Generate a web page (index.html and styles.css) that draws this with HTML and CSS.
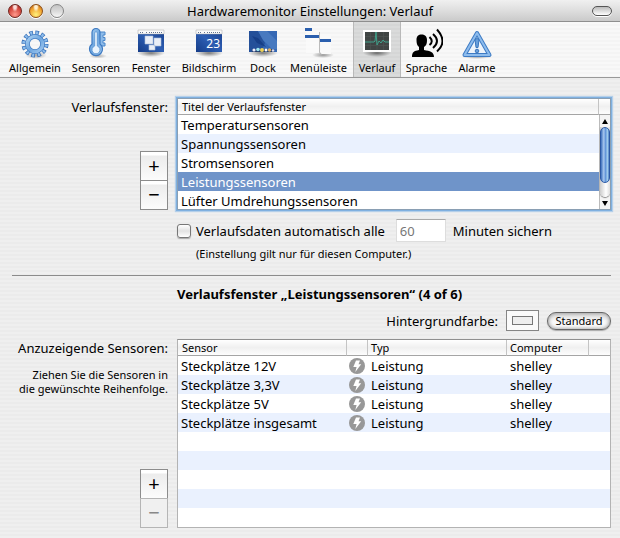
FILE: index.html
```html
<!DOCTYPE html>
<html lang="de">
<head>
<meta charset="utf-8">
<title>Hardwaremonitor Einstellungen: Verlauf</title>
<link rel="stylesheet" href="styles.css">
</head>
<body>
<svg class="defs" aria-hidden="true">
  <defs>
    <linearGradient id="aqua" x1="0" y1="0" x2="1" y2="1"><stop offset="0" stop-color="#a9d0f2"/><stop offset=".5" stop-color="#6ca5df"/><stop offset="1" stop-color="#9cc5ee"/></linearGradient>
    <linearGradient id="desk" x1="1" y1="0" x2="0" y2="1"><stop offset="0" stop-color="#173f8e"/><stop offset=".5" stop-color="#2d5eb3"/><stop offset="1" stop-color="#153c88"/></linearGradient>
    <radialGradient id="shade"><stop offset="0" stop-color="#000" stop-opacity=".5"/><stop offset="1" stop-color="#000" stop-opacity="0"/></radialGradient>
    <symbol id="bolt" viewBox="0 0 16 16"><circle cx="8" cy="8" r="8" fill="#989898"/><path d="M7 2.500h4L9.500 6.300h2.700L6.300 14l1.300-5H4.300z" fill="#fff"/></symbol>
  </defs>
</svg>
<header class="titlebar">
  <div class="lights">
    <button class="light red" aria-label="Schließen"></button>
    <button class="light amber" aria-label="Minimieren"></button>
    <button class="light clear" aria-label="Zoomen" disabled></button>
  </div>
  <h1>Hardwaremonitor Einstellungen: Verlauf</h1>
  <button class="pill" aria-label="Symbolleiste"></button>
</header>
<nav class="toolbar">
  <button class="tool">
    <svg viewBox="0 0 32 32"><ellipse cx="17" cy="28" rx="11" ry="4" fill="url(#shade)" opacity=".7"/>
      <g fill="none"><circle cx="16" cy="17" r="11" stroke="#3a72ba" stroke-width="5" stroke-dasharray="3.460 2.300"/><circle cx="16" cy="17" r="11" stroke="#8dbdec" stroke-width="3.600" stroke-dasharray="1.960 3.800" stroke-dashoffset="-.75"/>
      <circle cx="16" cy="17" r="7.600" stroke="#3f7ac2" stroke-width="4.800"/><circle cx="16" cy="17" r="7.600" stroke="url(#aqua)" stroke-width="3.400"/></g></svg>
    <span>Allgemein</span></button>
  <button class="tool">
    <svg viewBox="0 0 32 32"><ellipse cx="18" cy="29" rx="9" ry="2.500" fill="url(#shade)" opacity=".6"/>
      <path d="M19 5h6v3h-2v2.500h2v3h-2V16h2v3h-6" fill="#8dbbe9" stroke="#4c88ca"/>
      <path d="M12 5.500a4 4 0 0 1 8 0V17a6.500 6.500 0 1 1-8 0z" fill="url(#aqua)" stroke="#3c78c0" stroke-width="1.200"/>
      <path d="M14.700 6a1.300 1.300 0 0 1 2.600 0v13a4 4 0 1 1-2.600 0z" fill="#e8f3fd" stroke="#5b94d2" stroke-width=".8"/></svg>
    <span>Sensoren</span></button>
  <button class="tool">
    <svg viewBox="0 0 32 32"><ellipse cx="16" cy="26" rx="14" ry="4" fill="url(#shade)"/><path d="M3 3h26v22H3z" fill="url(#desk)"/><path d="M3 3h26v4H3z" fill="#fafafa" stroke="#aaa" stroke-width=".5"/><path d="M5 5.500h4M11 5.500h1M14 5.500h13" stroke="#65758f" stroke-dasharray="1 1"/>
      <g fill="#e9eef7" stroke="#aebfd9" stroke-width=".6"><path d="M10 9h8v8h-8zM19 11h7v8h-7zM14 18h6v5h-6z"/></g></svg>
    <span>Fenster</span></button>
  <button class="tool">
    <svg viewBox="0 0 32 32"><ellipse cx="16" cy="26" rx="14" ry="4" fill="url(#shade)"/><path d="M3 3h26v22H3z" fill="url(#desk)"/><path d="M3 3h26v4H3z" fill="#fafafa" stroke="#aaa" stroke-width=".5"/><path d="M5 5.500h4M11 5.500h1M14 5.500h13" stroke="#65758f" stroke-dasharray="1 1"/>
      <text x="27" y="21" class="num">23</text></svg>
    <span>Bildschirm</span></button>
  <button class="tool">
    <svg viewBox="0 0 32 32"><ellipse cx="16" cy="26" rx="15" ry="4" fill="url(#shade)"/><path d="M2 4h28v21H2z" fill="#3568b4"/><path d="M2 4h9l7 12-4 9H2z" fill="#245099"/><path d="M11 4l5 9 9 9h5V14L20 4z" fill="#4779bf"/><path d="M5 9l6 2 8 9-9-4z" fill="#173f87"/>
      <path d="M5 22h22v3H5z" fill="#203b6b"/><circle cx="7" cy="23" r="1.600" fill="#eef"/><circle cx="11" cy="22.500" r="1.800" fill="#9de6ef"/><circle cx="15" cy="23" r="2" fill="#f0d257"/><circle cx="19" cy="23" r="1.500" fill="#fff"/><circle cx="22.500" cy="23" r="1.700" fill="#dcae62"/><circle cx="26" cy="23.500" r="1.300" fill="#dde"/></svg>
    <span>Dock</span></button>
  <button class="tool">
    <svg viewBox="0 0 32 32"><ellipse cx="20" cy="28" rx="11" ry="3" fill="url(#shade)" opacity=".8"/><path d="M3 4h13v22H3z" fill="#fafafa" opacity=".8"/><path d="M17 7h11v20H18z" fill="#f9f9f9"/><path d="M2 1h7v3H2zM2 8h14v3H2zM17 12h11v3H17z" fill="#2b5fae"/><path d="M16.500 5v20q0 2 2 2" fill="none" stroke="#bbb"/></svg>
    <span>Menüleiste</span></button>
  <button class="tool active" aria-pressed="true">
    <svg viewBox="0 0 32 32"><ellipse cx="16" cy="26" rx="14" ry="4" fill="url(#shade)"/><path d="M3 4h26v20H3z" fill="#404544" stroke="#fff" stroke-width="2"/><path d="M9.500 5v18M16 5v18M22.500 5v18M4 9.500h24M4 14h24M4 18.500h24" stroke="#4d5351" stroke-width=".7"/><path d="M4 15h9l1-1 1-9 1 13 2-4 2 2 2-3 2 2h4" fill="none" stroke="#3f9f89"/></svg>
    <span>Verlauf</span></button>
  <button class="tool">
    <svg viewBox="0 0 32 32"><path d="M1 30c0-5 2-6 7-7v-3c-2-1.500-2.500-3.500-2.500-7C5.500 9 7.500 7.500 10.500 7.500S16 9 16 13c0 3.500-.5 5.500-3 7v3c6 1 10 2 10 7z"/><g fill="none" stroke="#000" stroke-width="2"><path d="M18.500 10q4.500 4.500 0 8"/><path d="M22 7q8 7 0 14"/><path d="M26 2.500q11 12 0 22"/></g></svg>
    <span>Sprache</span></button>
  <button class="tool">
    <svg viewBox="0 0 32 32"><ellipse cx="16" cy="30" rx="15" ry="2" fill="url(#shade)" opacity=".6"/><path d="M16 6l12.500 22h-25z" fill="#eef4fb" stroke="#3e7bc4" stroke-width="4" stroke-linejoin="round"/><path d="M16 6l12.500 22h-25z" fill="none" stroke="#8dbced" stroke-width="2" stroke-linejoin="round"/><path d="M14 12.500q2-2 4 0l-1 8h-2z" fill="#689fdb" stroke="#3a76bd"/><circle cx="16" cy="24" r="1.800" fill="#689fdb" stroke="#3a76bd"/></svg>
    <span>Alarme</span></button>
</nav>
<main>
  <section class="row windows">
    <div class="side">
      <h2 class="label">Verlaufsfenster:</h2>
      <div class="stepper"><button aria-label="Fenster hinzufügen">+</button><button aria-label="Fenster entfernen">−</button></div>
    </div>
    <div class="list focused">
      <table>
        <thead><tr><th>Titel der Verlaufsfenster</th><th class="corner"></th></tr></thead>
      </table>
      <div class="scroller">
        <table>
          <tbody>
            <tr><td>Temperatursensoren</td></tr>
            <tr><td>Spannungssensoren</td></tr>
            <tr><td>Stromsensoren</td></tr>
            <tr class="selected"><td>Leistungssensoren</td></tr>
            <tr><td>Lüfter Umdrehungssensoren</td></tr>
          </tbody>
        </table>
        <div class="bar"><button aria-label="Nach oben"><svg viewBox="0 0 6 5"><path d="M3 0l3 5H0z"/></svg></button><div class="track"><div class="thumb"></div></div><button aria-label="Nach unten"><svg viewBox="0 0 6 5"><path d="M3 5l3-5H0z"/></svg></button></div>
      </div>
    </div>
  </section>
  <section class="save">
    <div class="save-line">
      <input type="checkbox" id="auto"><label for="auto">Verlaufsdaten automatisch alle</label>
      <input type="text" id="minutes" value="60" disabled><label for="minutes">Minuten sichern</label>
    </div>
    <p class="note">(Einstellung gilt nur für diesen Computer.)</p>
  </section>
  <hr>
  <h2 class="heading">Verlaufsfenster „Leistungssensoren“ (4 of 6)</h2>
  <div class="color-line">
    <label for="color">Hintergrundfarbe:</label>
    <input type="color" id="color" value="#eeeeee">
    <button class="standard">Standard</button>
  </div>
  <section class="row sensors">
    <div class="side">
      <h2 class="label">Anzuzeigende Sensoren:</h2>
      <p class="hint">Ziehen Sie die Sensoren in<br>die gewünschte Reihenfolge.</p>
      <div class="stepper"><button aria-label="Sensor hinzufügen">+</button><button aria-label="Sensor entfernen" disabled>−</button></div>
    </div>
    <div class="list striped">
      <table>
        <colgroup><col class="c-name"><col class="c-icon"><col class="c-type"><col class="c-host"><col class="c-end"></colgroup>
        <thead><tr><th>Sensor</th><th></th><th>Typ</th><th>Computer</th><th></th></tr></thead>
        <tbody>
          <tr><td>Steckplätze 12V</td><td class="icon"><svg><use href="#bolt"/></svg></td><td>Leistung</td><td>shelley</td><td></td></tr>
          <tr><td>Steckplätze 3,3V</td><td class="icon"><svg><use href="#bolt"/></svg></td><td>Leistung</td><td>shelley</td><td></td></tr>
          <tr><td>Steckplätze 5V</td><td class="icon"><svg><use href="#bolt"/></svg></td><td>Leistung</td><td>shelley</td><td></td></tr>
          <tr><td>Steckplätze insgesamt</td><td class="icon"><svg><use href="#bolt"/></svg></td><td>Leistung</td><td>shelley</td><td></td></tr>
        </tbody>
      </table>
    </div>
  </section>
</main>
</body>
</html>
```
FILE: styles.css
```css
* { box-sizing: border-box; }
html { height: 100%; }
body {
  margin: 0;
  min-height: 100%;
  display: flex;
  flex-direction: column;
  font: 13px/16px "Noto Sans", "Open Sans", sans-serif;
  color: #000;
  background: repeating-linear-gradient(#efefef 0 2px, #ebebeb 2px 4px);
}
button, input { font: inherit; color: inherit; margin: 0; padding: 0; }
button { border: 0; background: none; }
h1, h2, p { margin: 0; font-size: 13px; font-weight: 400; }
table { width: 100%; border-collapse: separate; border-spacing: 0; table-layout: fixed; }
.defs { position: absolute; width: 0; height: 0; }

.titlebar {
  display: grid;
  grid-template-columns: 72px 1fr 72px;
  align-items: center;
  height: 22px;
  padding: 0 8px;
  border-bottom: 1px solid #8e8e8e;
  border-radius: 6px 6px 0 0;
  background: linear-gradient(#f0f0f0, #dedede 50%, #cacaca);
}
.titlebar h1 { text-align: center; }
.lights { display: flex; gap: 7px; }
.light {
  width: 14px;
  height: 14px;
  border: 1px solid #777;
  border-radius: 50%;
  box-shadow: 0 1px 0 #fff;
}
.red { border-color: #70251f; background: radial-gradient(ellipse at 50% 15%, #fbdcd8 0 15%, transparent 35%), radial-gradient(circle at 50% 80%, #ff9a8d, #d2453b 60%, #8c231c); }
.amber { border-color: #8c4e17; background: radial-gradient(ellipse at 50% 15%, #fff0d0 0 15%, transparent 35%), radial-gradient(circle at 50% 80%, #fff27c, #f0a02d 60%, #a5500e); }
.clear { border-color: #858585; background: linear-gradient(#c4c4c4, #d9d9d9 50%, #f7f7f7); }
.pill {
  justify-self: end;
  width: 20px;
  height: 10px;
  border: 1px solid #555;
  border-radius: 5px;
  background: linear-gradient(#bbb, #fff);
  box-shadow: 0 1px 0 #fff;
}

.toolbar {
  display: grid;
  grid-template-columns: 62px 60px 50px 66px 42px 69px 48px 51px 50px;
  height: 56px;
  padding-left: 4px;
  border-bottom: 1px solid #989898;
  background: repeating-linear-gradient(#f8f8f8 0 2px, #f4f4f4 2px 4px);
}
.tool {
  display: flex;
  flex-direction: column;
  align-items: center;
  gap: 1px;
  padding-top: 5px;
  font-size: 11px;
  line-height: 16px;
}
.tool svg { width: 32px; height: 32px; flex: none; }
.num { font: 12px "Noto Sans", sans-serif; fill: #fff; text-anchor: end; }
.active {
  border: solid #b9b9b9;
  border-width: 0 1px;
  background: repeating-linear-gradient(#dadbdb 0 2px, #d5d6d6 2px 4px);
}

main {
  flex: 1;
  display: flex;
  flex-direction: column;
  padding: 20px 9px 10px 12px;
}
.row { display: grid; grid-template-columns: 156px 1fr; gap: 9px; }
.side { display: flex; flex-direction: column; align-items: flex-end; }
.label { padding-top: 1px; white-space: nowrap; }
.hint { padding-top: 12px; font-size: 11px; line-height: 14px; text-align: right; }
.stepper {
  display: flex;
  flex-direction: column;
  width: 28px;
  margin-top: auto;
}
.stepper button {
  height: 30px;
  border: 1px solid #8c8c8c;
  background: linear-gradient(#fff 0 3px, #ececec 4px, #fcfcfc);
  font-size: 20px;
  line-height: 26px;
}
.stepper button + button { margin-top: -1px; }
.stepper button:disabled { border-color: #b5b5b5; background: #f0f0f0; color: #888; }

.list { border: 1px solid #b3b3b3; border-top-color: #8f8f8f; background: #fff; }
.focused { border-color: #8a9fb3; box-shadow: 0 0 0 1px #7fb0e0, 0 0 1px 2px #b4cfe9; }
th {
  height: 16px;
  padding: 0 4px;
  border-bottom: 1px solid #a5a5a5;
  border-left: 1px solid #c4c4c4;
  background: linear-gradient(#fff, #f0f0f0 50%, #fdfdfd);
  font-size: 11px;
  line-height: 15px;
  font-weight: 400;
  text-align: left;
}
th:first-child { border-left: 0; }
th + th { padding-left: 3px; }
.corner { width: 12px; }
td { height: 19px; padding: 1px 3px 0; line-height: 18px; white-space: nowrap; }
td + td { padding-left: 4px; }
.scroller { display: flex; height: 94px; overflow: hidden; }
.scroller table { flex: 1; align-self: flex-start; }
.scroller td { padding-top: 0; }
.scroller tr:nth-child(even) { background: #eaf1fe; }
.scroller tr.selected { background: #6f94c9; color: #fff; }
.bar { display: flex; flex-direction: column; width: 11px; background: #f4f4f4; border-left: 1px solid #bbb; }
.bar button { display: flex; align-items: center; justify-content: center; height: 12px; }
.bar svg { width: 6px; height: 5px; }
.track { flex: 1; border-radius: 0 0 5px 5px; background: linear-gradient(90deg, #ccc, #fff 60%, #ddd); box-shadow: 0 1px 1px #888; }
.thumb {
  height: 80%;
  border: 1px solid #2d5aa5;
  border-radius: 5px;
  background: linear-gradient(90deg, #3e70bc, #a9c9f0 35%, #6194d8 55%, #a7d2ee 85%, #3e70bc);
}
.striped { min-height: 189px; background: repeating-linear-gradient(#fff 0 19px, #eaf1fe 19px 38px) 0 16px; }
.c-name { width: 168px; }
.c-icon { width: 21px; }
.c-host { width: 82px; }
.c-end { width: 22px; }
td.icon { padding: 1px 0 0 3px; line-height: 0; }
.icon svg { width: 16px; height: 16px; }

.save { padding: 9px 0 0 165px; }
.save-line { display: flex; align-items: center; max-width: 375px; white-space: nowrap; }
input[type="checkbox"] {
  appearance: none;
  width: 14px;
  height: 14px;
  margin-right: 5px;
  border: 1px solid #777;
  border-radius: 3px;
  background: linear-gradient(#fff, #e2e2e2 50%, #fff);
  box-shadow: 0 1px 1px #aaa;
}
input[type="text"] {
  width: 50px;
  height: 23px;
  margin: 0 7px 0 auto;
  padding: 0 3px;
  border: 1px solid #ddd;
  border-top-color: #aaa;
  background: #fff;
  color: #777;
}
.note { padding: 4px 0 0 19px; font-size: 11px; }
hr { width: 100%; height: 1px; margin: 13px 0 0; border: 0; background: #8b8b8b; }
.heading { padding: 10px 0 0 165px; font-weight: 700; }
.color-line { display: flex; justify-content: flex-end; align-items: center; gap: 8px; padding: 8px 0; }
input[type="color"] {
  appearance: none;
  width: 33px;
  height: 21px;
  padding: 5px;
  border: 1px solid #858585;
  background: #fafafa;
}
input[type="color"]::-webkit-color-swatch-wrapper { padding: 0; }
input[type="color"]::-webkit-color-swatch { border: 1px solid #777; border-radius: 0; }
.standard {
  width: 64px;
  height: 18px;
  border: 1px solid #666;
  border-radius: 9px;
  background: linear-gradient(#dcdcdc, #f7f7f7 50%, #fff);
  box-shadow: inset 0 0 4px #888, 0 1px 1px #aaa;
  font-size: 11px;
  line-height: 15px;
}
.sensors { flex: 1; }
```
